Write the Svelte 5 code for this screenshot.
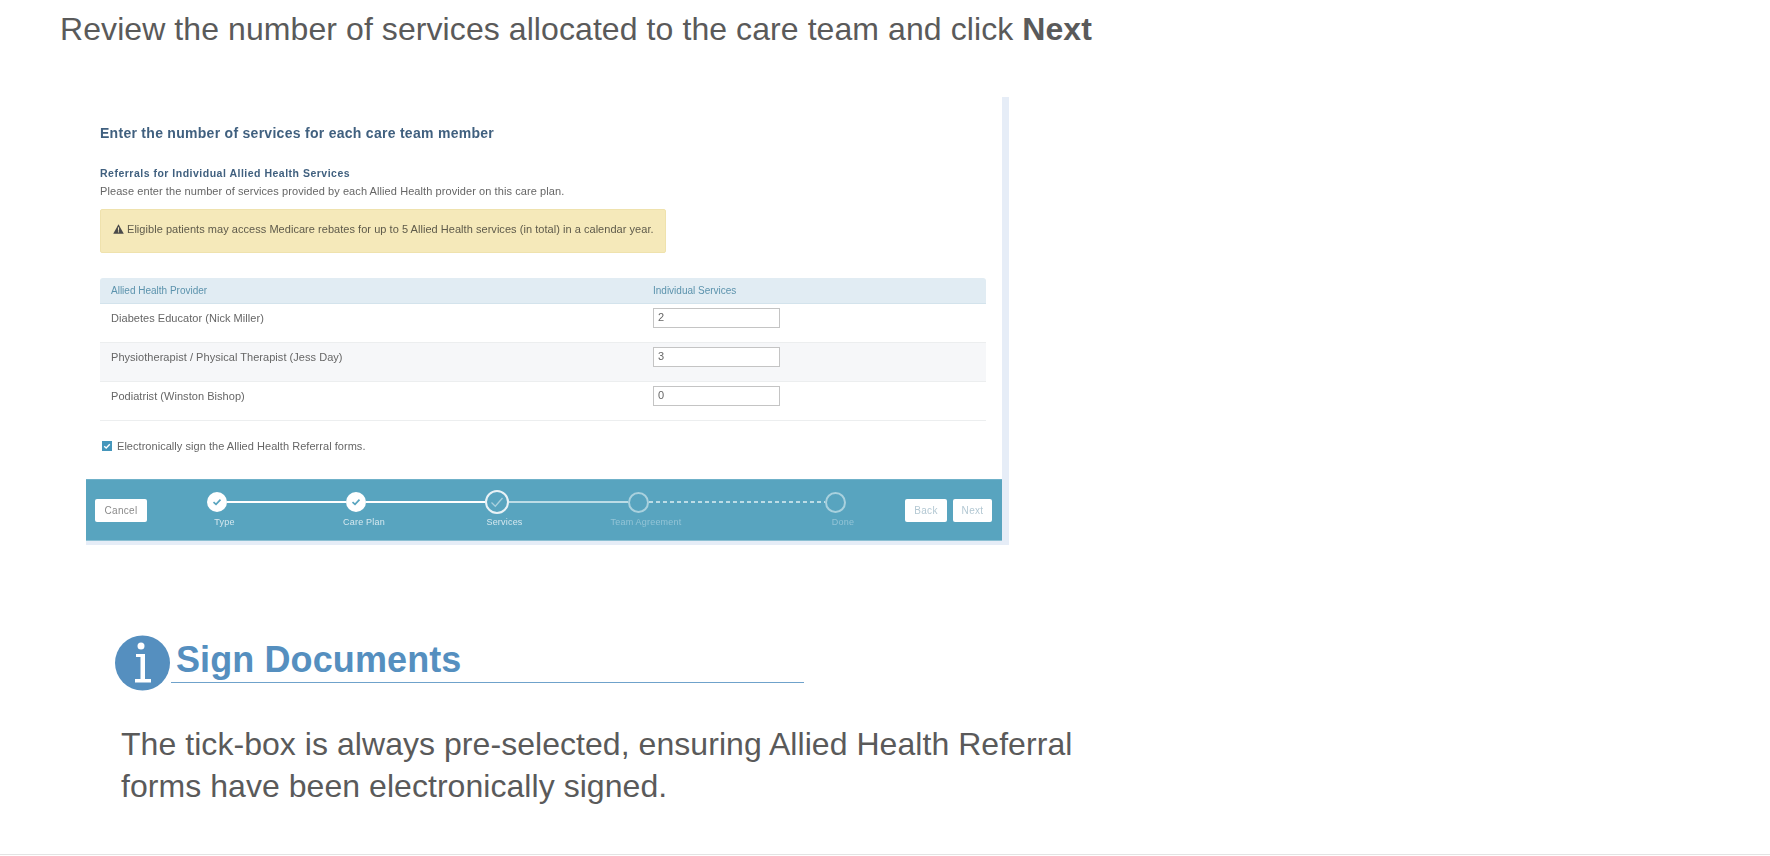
<script>
	const rows = [
		{ name: 'Diabetes Educator (Nick Miller)', count: 2 },
		{ name: 'Physiotherapist / Physical Therapist (Jess Day)', count: 3 },
		{ name: 'Podiatrist (Winston Bishop)', count: 0 }
	];

	const steps = [
		{ label: 'Type', state: 'done', line: 'solid', width: 139.5 },
		{ label: 'Care Plan', state: 'done', line: 'solid', width: 140.5 },
		{ label: 'Services', state: 'current', line: 'thin', width: 141.5 },
		{ label: 'Team Agreement', state: 'todo', line: 'dashed', width: 197 },
		{ label: 'Done', state: 'todo', line: 'none', width: 20 }
	];
</script>

<div class="page">
	<p class="lead">Review the number of services allocated to the care team and click <strong>Next</strong></p>

	<div class="shot">
		<div class="shot-body">
			<h2>Enter the number of services for each care team member</h2>
			<h3>Referrals for Individual Allied Health Services</h3>
			<p class="hint">Please enter the number of services provided by each Allied Health provider on this care plan.</p>

			<div class="alert">
				<svg viewBox="0 0 12 11" width="11" height="10">
					<path d="M6 0.4 L11.8 10.6 H0.2 Z" fill="#4a4a4a" />
					<rect x="5.4" y="3.6" width="1.2" height="3.8" fill="#f5e9ba" />
					<rect x="5.4" y="8" width="1.2" height="1.2" fill="#f5e9ba" />
				</svg>
				<span>Eligible patients may access Medicare rebates for up to 5 Allied Health services (in total) in a calendar year.</span>
			</div>

			<div class="table">
				<div class="thead">
					<span>Allied Health Provider</span>
					<span>Individual Services</span>
				</div>
				{#each rows as row, i}
					<div class="row" class:striped={i === 1}>
						<span>{row.name}</span>
						<div class="input">{row.count}</div>
					</div>
				{/each}
			</div>

			<label class="sign">
				<span class="box">
					<svg viewBox="0 0 10 10" width="10" height="10">
						<path d="M2.2 5.2 L4.2 7 L7.8 3.2" fill="none" stroke="#fff" stroke-width="1.4" />
					</svg>
				</span>
				Electronically sign the Allied Health Referral forms.
			</label>
		</div>

		<div class="footer">
			<button class="btn cancel">Cancel</button>
			<div class="stepper">
				{#each steps as step}
					<div class="step {step.state}" style="width: {step.width}px">
						<div class="track">
							<span class="dot">
								{#if step.state === 'done'}
									<svg viewBox="0 0 20 20" width="20" height="20">
										<path d="M6.5 10.2 L9 12.4 L13.5 7.6" fill="none" stroke="#58a4bf" stroke-width="1.7" />
									</svg>
								{:else if step.state === 'current'}
									<svg viewBox="0 0 20 20" width="20" height="20">
										<path d="M4.5 10.5 L8.3 14.2 L15.5 6" fill="none" stroke="#a9d1de" stroke-width="1.3" />
									</svg>
								{/if}
							</span>
							{#if step.line !== 'none'}
								<span class="line {step.line}"></span>
							{/if}
						</div>
						<span class="label">{step.label}</span>
					</div>
				{/each}
			</div>
			<div class="nav">
				<button class="btn muted back">Back</button>
				<button class="btn muted next">Next</button>
			</div>
		</div>
	</div>

	<div class="note">
		<div class="note-head">
			<svg class="info" viewBox="0 0 56 56" width="56" height="56">
				<circle cx="27.5" cy="28" r="27.5" fill="#558fbf" />
				<circle cx="26" cy="11" r="3.5" fill="#fff" />
				<path d="M21 19 H30 V44 H36 V47.5 H20 V44 H25.5 V22 H21 Z" fill="#fff" />
			</svg>
			<h1>Sign Documents</h1>
		</div>
		<p>The tick-box is always pre-selected, ensuring Allied Health Referral forms have been electronically signed.</p>
	</div>
</div>

<style>
	:global(body) {
		margin: 0;
		background: #fff;
	}

	.page {
		height: 855px;
		box-sizing: border-box;
		border-bottom: 1px solid #e3e3e3;
		font-family: 'Liberation Sans', Arial, sans-serif;
		color: #5a5a5a;
		overflow: hidden;
	}

	.lead {
		margin: 0;
		padding: 11px 0 0 60px;
		font-size: 32px;
		line-height: 36px;
		letter-spacing: 0.08px;
	}

	.shot {
		margin: 50px 0 0 86px;
		width: 923px;
		height: 448px;
		box-sizing: border-box;
		border-right: 7px solid #e6edf7;
		border-bottom: 4px solid #e6edf7;
		display: flex;
		flex-direction: column;
		filter: blur(0.4px);
	}

	.shot-body {
		flex: 1;
		padding: 28px 16px 0 14px;
		font-size: 11px;
		letter-spacing: 0.08px;
		color: #666;
	}

	h2 {
		margin: 0;
		font-size: 14px;
		line-height: 16px;
		color: #40607f;
		letter-spacing: 0.28px;
	}

	h3 {
		margin: 26px 0 0;
		font-size: 10.5px;
		line-height: 12px;
		color: #40607f;
		letter-spacing: 0.5px;
	}

	.hint {
		margin: 6px 0 0;
		line-height: 13px;
	}

	.alert {
		margin-top: 11px;
		width: 566px;
		height: 44px;
		box-sizing: border-box;
		padding: 0 0 5px 12px;
		display: flex;
		align-items: center;
		gap: 3px;
		background: #f5e9ba;
		border: 1px solid #efe2ad;
		border-radius: 2px;
		color: #5e5a4a;
		letter-spacing: 0.04px;
	}

	.table {
		margin-top: 25px;
	}

	.thead {
		height: 26px;
		display: grid;
		grid-template-columns: 542px 1fr;
		align-items: center;
		padding-left: 11px;
		background: #e1ecf3;
		border-bottom: 1px solid #d3e3ec;
		box-sizing: border-box;
		border-radius: 3px 3px 0 0;
		color: #5c93ad;
		font-size: 10px;
		letter-spacing: 0;
	}

	.row {
		height: 39px;
		display: grid;
		grid-template-columns: 542px 1fr;
		align-items: start;
		padding: 4px 0 0 11px;
		box-sizing: border-box;
		border-bottom: 1px solid #eceeef;
		line-height: 20px;
		letter-spacing: 0.04px;
	}

	.striped {
		background: #f6f7f9;
	}

	.input {
		width: 127px;
		height: 20px;
		box-sizing: border-box;
		padding-left: 4px;
		line-height: 17px;
		background: #fff;
		border: 1px solid #c4c4c4;
	}

	.sign {
		margin-top: 19px;
		margin-left: 2px;
		display: flex;
		align-items: center;
		gap: 5px;
		line-height: 12px;
		letter-spacing: 0.04px;
	}

	.box {
		width: 10px;
		height: 10px;
		background: #4596bb;
		display: block;
	}

	.box svg {
		display: block;
	}

	.footer {
		height: 62px;
		background: #58a4bf;
		border-top: 1px solid #6fb1c9;
		border-bottom: 1px solid #8cc0d3;
		box-sizing: border-box;
		display: flex;
		align-items: flex-start;
		padding: 0 10px 0 9px;
	}

	.btn {
		height: 23px;
		padding: 0;
		border: none;
		border-radius: 2px;
		background: #fff;
		font: 10px 'Liberation Sans', Arial, sans-serif;
		letter-spacing: 0.3px;
	}

	.cancel {
		width: 52px;
		margin-top: 18.5px;
		color: #8a8a8a;
	}

	.stepper {
		display: flex;
		margin-left: 59.5px;
		margin-top: 11px;
	}

	.track {
		display: flex;
		align-items: center;
		height: 22px;
	}

	.dot {
		width: 20px;
		height: 20px;
		flex: none;
		box-sizing: border-box;
		border-radius: 50%;
		display: block;
	}

	.dot svg {
		display: block;
	}

	.done .dot {
		background: #fff;
	}

	.current .dot {
		width: 24px;
		height: 24px;
		margin-left: -2px;
		border: 2px solid #e8f2f6;
	}

	.todo .dot {
		border: 2px solid #a9d1de;
		width: 21px;
		height: 21px;
	}

	.line {
		flex: 1;
		display: block;
	}

	.line.solid {
		height: 2px;
		background: #fff;
	}

	.line.thin {
		height: 1.5px;
		background: #bcdce6;
	}

	.line.dashed {
		height: 1.5px;
		background: repeating-linear-gradient(90deg, #bcdce6 0 4px, transparent 4px 7px);
	}

	.label {
		display: block;
		width: max-content;
		margin-top: 4px;
		margin-left: 8px;
		font-size: 9px;
		line-height: 11px;
		letter-spacing: 0.2px;
		white-space: nowrap;
		color: #d5e8ef;
		transform: translateX(calc(10px - 50%));
	}

	.todo .label {
		color: #93c4d6;
	}

	.nav {
		margin-left: auto;
		margin-top: 18.5px;
		display: flex;
		gap: 6px;
	}

	.muted {
		color: #b3c8d3;
	}

	.back {
		width: 42px;
	}

	.next {
		width: 39px;
	}

	.note {
		padding: 90px 0 0 115px;
	}

	.note-head {
		position: relative;
		width: 689px;
		height: 56px;
	}

	.info {
		display: block;
	}

	h1 {
		position: absolute;
		left: 56px;
		top: 0;
		right: 0;
		height: 47.5px;
		margin: 0;
		box-sizing: border-box;
		padding: 2px 0 0 5px;
		font-size: 36px;
		line-height: 45px;
		letter-spacing: 0.1px;
		color: #558fbf;
		border-bottom: 1.5px solid #6fa2cb;
	}

	.note p {
		margin: 32px 0 0 6px;
		width: 980px;
		font-size: 32px;
		line-height: 42px;
		letter-spacing: 0.05px;
	}
</style>
